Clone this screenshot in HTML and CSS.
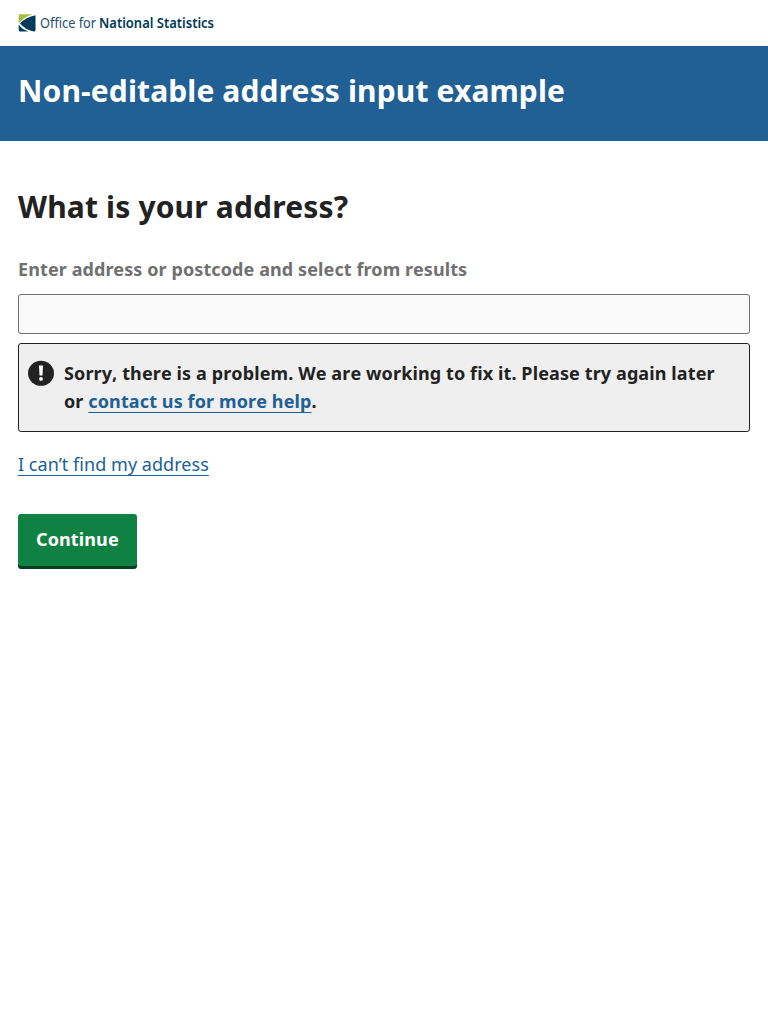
FILE: index.html
```html
<!DOCTYPE html>
<html lang="en">
<head>
<meta charset="utf-8">
<title>Non-editable address input example</title>
<link rel="stylesheet" href="styles.css">
</head>
<body>
<header>
  <div class="brand">
    <svg class="brand-mark" viewBox="0 0 18 18" aria-hidden="true">
      <path fill="#a8bd3a" d="M2 .3H15Q6 3 .7 9.300V1.600Q.7.300 2 .3z"/>
      <path fill="#003c57" d="M17.500 1.200V16q0 1.500-1.500 1.500Q7.500 16 2 9.500Q8 3 17.500 1.200z"/>
      <path fill="#003c57" d="M.7 10.500Q4 15.500 10.500 17.500H2.200Q.7 17.500.7 16z"/>
    </svg>
    <svg class="brand-name" viewBox="0 0 175 18" role="img" aria-label="Office for National Statistics">
      <text class="light" x="0" y="14" textLength="56" lengthAdjust="spacingAndGlyphs">Office for</text>
      <text class="strong" x="59" y="14" textLength="115" lengthAdjust="spacingAndGlyphs">National Statistics</text>
    </svg>
  </div>
  <div class="banner"><p class="banner-title">Non-editable address input example</p></div>
</header>
<main class="page">
  <h1 class="heading">What is your address?</h1>
  <label class="label" for="address">Enter address or postcode and select from results</label>
  <input class="input" id="address" type="text" disabled>
  <div class="panel">
    <svg class="panel-icon" viewBox="0 0 26 26" aria-hidden="true">
      <ellipse cx="13" cy="13.300" rx="13" ry="12.500" fill="#222"/>
      <path fill="#fff" d="M11 5.500h4l-.5 10h-3z"/><circle cx="13" cy="18.900" r="1.900" fill="#fff"/>
    </svg>
    <p class="panel-text">Sorry, there is a problem. We are working to fix it. Please try again later or <a class="link" href="#">contact us for more help</a>.</p>
  </div>
  <p class="manual"><a class="link" href="#">I can’t find my address</a></p>
  <button class="button" type="button">Continue</button>
</main>
</body>
</html>
```
FILE: styles.css
```css
* { box-sizing: border-box; }
body { min-height: 100vh; margin: 0; background: #fff; color: #222; font: 18px/28px "Noto Sans", sans-serif; }
p { margin: 0; }
.brand { display: flex; align-items: center; gap: 4px; height: 46px; padding: 0 18px; }
.brand-mark { width: 18px; height: 18px; }
.brand-name { width: 175px; height: 18px; overflow: visible; fill: #003c57; font-size: 14.500px; }
.light { font-weight: 400; fill: #1f536b; }
.strong { font-weight: 600; }
.banner { height: 95px; padding: 25px 18px 0; background: #206095; color: #fff; }
.banner-title { font-size: 30px; line-height: 40px; font-weight: 700; letter-spacing: .13px; }
.page { padding: 46px 18px 0; }
.heading { margin: 0 0 28px; font-size: 30px; line-height: 40px; font-weight: 700; letter-spacing: .16px; }
.label { display: block; margin-bottom: 11px; color: #707071; font-weight: 700; letter-spacing: .1px; }
.input { display: block; width: 100%; height: 40px; border: 1px solid #707071; border-radius: 3px; background: #fafafa; }
.panel { display: flex; gap: 10px; height: 89px; margin-top: 9px; padding: 15px 18px 0 9px; border: 1px solid #222; border-radius: 3px; background: #efeff0; }
.panel-icon { flex: none; width: 26px; height: 26px; margin-top: 1px; }
.panel-text { font-weight: 700; letter-spacing: .115px; font-kerning: none; }
.link { color: #206095; text-decoration: underline; text-decoration-thickness: 1px; text-underline-offset: 4px; }
.manual { margin-top: 18px; letter-spacing: .04px; }
.button { display: block; height: 52px; margin-top: 36px; padding: 0 18px 2px; border: 0; border-radius: 3px; background: #0f8243; box-shadow: 0 3px 0 #073d20; color: #fff; font: 700 18px/50px "Noto Sans", sans-serif; letter-spacing: .12px; }
```
